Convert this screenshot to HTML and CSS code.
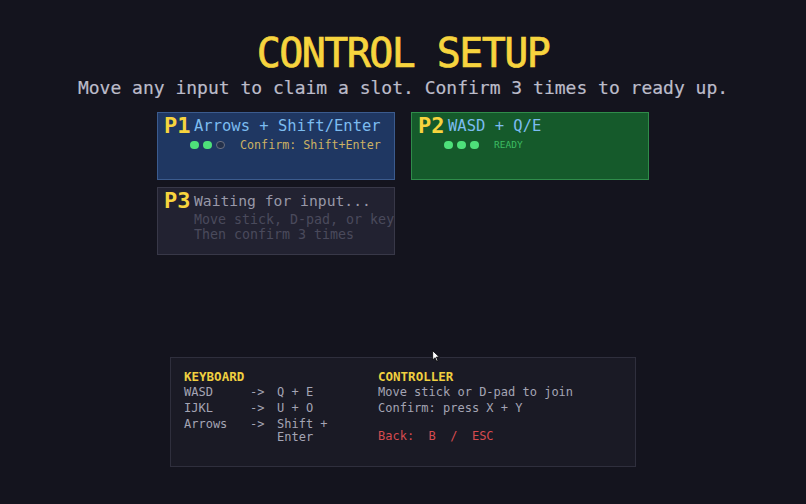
FILE: index.html
```html
<!DOCTYPE html>
<html>
<head>
<meta charset="utf-8">
<title>Control Setup</title>
<link rel="stylesheet" href="styles.css">
</head>
<body>
<div class="screen">
  <h1 class="title">CONTROL SETUP</h1>
  <p class="subtitle">Move any input to claim a slot. Confirm 3 times to ready up.</p>

  <div class="slots">
    <div class="card card-p1">
      <div class="card-head">
        <span class="plabel">P1</span>
        <span class="ctitle">Arrows + Shift/Enter</span>
      </div>
      <div class="status">
        <span class="dot on"></span><span class="dot on"></span><span class="dot off"></span>
        <span class="hint">Confirm: Shift+Enter</span>
      </div>
    </div>

    <div class="card card-p2">
      <div class="card-head">
        <span class="plabel">P2</span>
        <span class="ctitle">WASD + Q/E</span>
      </div>
      <div class="status">
        <span class="dot on"></span><span class="dot on"></span><span class="dot on"></span>
        <span class="ready">READY</span>
      </div>
    </div>

    <div class="card card-empty">
      <div class="card-head">
        <span class="plabel">P3</span>
        <span class="ctitle wait">Waiting for input...</span>
      </div>
      <div class="sub">Move stick, D-pad, or key</div>
      <div class="sub">Then confirm 3 times</div>
    </div>
  </div>

  <div class="help">
    <div class="help-col kb">
      <div class="help-h">KEYBOARD</div>
      <div class="kb-grid">
        <span>WASD</span><span>-&gt;</span><span>Q + E</span>
        <span>IJKL</span><span>-&gt;</span><span>U + O</span>
        <span>Arrows</span><span>-&gt;</span><span>Shift + Enter</span>
      </div>
    </div>
    <div class="help-col ctrl">
      <div class="help-h">CONTROLLER</div>
      <div>Move stick or D-pad to join</div>
      <div>Confirm: press X + Y</div>
      <div class="back">Back:  B  /  ESC</div>
    </div>
  </div>

  <svg class="cursor" width="8" height="12" viewBox="0 0 12 18" aria-hidden="true">
    <path d="M1 1 L1 15 L4.5 11.5 L7 17 L9 16 L6.6 10.6 L11 10.6 Z" fill="#ffffff" stroke="#000000" stroke-width="1.2" stroke-linejoin="round"/>
  </svg>
</div>
</body>
</html>
```

FILE: styles.css
```css
html, body {
  margin: 0;
  padding: 0;
}

body {
  background: #14141e;
  font-family: "DejaVu Sans Mono", "Liberation Mono", monospace;
  color: #b4b4c2;
  width: 806px;
  height: 504px;
  overflow: hidden;
}

.screen {
  position: relative;
  width: 806px;
  height: 504px;
  padding-top: 29px;
  box-sizing: border-box;
}

.title {
  margin: 0;
  text-align: center;
  font-size: 40px;
  line-height: 48px;
  font-weight: normal;
  letter-spacing: -1.6px;
  color: #f7d43e;
  -webkit-text-stroke: 0.7px #f7d43e;
}

.subtitle {
  margin: 0;
  text-align: center;
  font-size: 18px;
  line-height: 22px;
  color: #bcbcca;
  white-space: nowrap;
  -webkit-text-stroke: 0.2px #bcbcca;
}

.slots {
  width: 492px;
  margin: 13px auto 0;
  display: grid;
  grid-template-columns: 238px 238px;
  column-gap: 16px;
  row-gap: 7px;
}

.card {
  height: 68px;
  box-sizing: border-box;
  border: 1px solid;
  padding: 2px 6px 0;
  overflow: hidden;
  white-space: nowrap;
}

.card-p1 {
  background: #1f3762;
  border-color: #3b5b8e;
}

.card-p2 {
  background: #155a2b;
  border-color: #2f8c4a;
}

.card-empty {
  background: #222231;
  border-color: #383848;
}

.card-head {
  display: flex;
  align-items: center;
  gap: 3.5px;
  height: 22px;
}

.plabel {
  font-size: 22px;
  line-height: 22px;
  font-weight: bold;
  color: #f7d43e;
}

.ctitle {
  font-size: 15.5px;
  line-height: 18px;
  color: #7cbcf0;
}

.ctitle.wait {
  font-size: 14.7px;
  color: #9898a8;
}

.status {
  display: flex;
  align-items: center;
  gap: 4.5px;
  height: 12px;
  margin: 2px 0 0 26px;
}

.dot {
  width: 8.5px;
  height: 8.5px;
  border-radius: 50%;
  box-sizing: border-box;
}

.dot.on {
  background: #4ee07a;
}

.dot.off {
  background: #23304a;
  border: 1px solid #6a6f80;
}

.hint {
  margin-left: 11px;
  font-size: 11.7px;
  line-height: 12px;
  color: #cdb263;
}

.ready {
  margin-left: 11px;
  font-size: 9.5px;
  line-height: 12px;
  color: #3cbc62;
}

.sub {
  margin: 0 0 0 30px;
  font-size: 13.3px;
  line-height: 15px;
  color: #4a4a5c;
}

.help {
  width: 466px;
  height: 110px;
  box-sizing: border-box;
  margin: 102px auto 0;
  padding: 12px 13px;
  background: #1a1a25;
  border: 1px solid #2f2f3d;
  display: flex;
  font-size: 12px;
  line-height: 13px;
  color: #a4a4b4;
}

.help-col {
  display: flex;
  flex-direction: column;
  gap: 3px;
}

.kb {
  width: 194px;
  flex: none;
}

.help-h {
  font-size: 12.5px;
  font-weight: bold;
  color: #f0d040;
}

.kb-grid {
  display: grid;
  grid-template-columns: 66px 27px 56px;
  row-gap: 3px;
}

.back {
  margin-top: 12px;
  color: #d64b4f;
  white-space: pre;
}

.cursor {
  position: absolute;
  left: 432px;
  top: 350px;
}
```
